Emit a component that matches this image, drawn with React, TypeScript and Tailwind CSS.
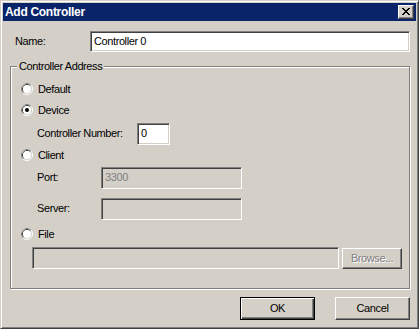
import React from "react";

const FONT = "font-['Liberation_Sans',Arial,sans-serif]";

const Radio = ({ checked }: { checked?: boolean }) => (
  <svg width="12" height="12" viewBox="0 0 12 12" className="shrink-0">
    <circle cx="6" cy="6" r="5.5" fill="none" stroke="#ffffff" />
    <path d="M2.11 9.89A5.5 5.5 0 0 1 9.89 2.11" fill="none" stroke="#808080" />
    <circle cx="6" cy="6" r="4.5" fill="#ffffff" stroke="#d4d0c8" />
    <path d="M2.82 9.18A4.5 4.5 0 0 1 9.18 2.82" fill="none" stroke="#404040" />
    <circle cx="6" cy="6" r="4" fill="#ffffff" />
    {checked && <circle cx="6" cy="6" r="2" fill="#000000" />}
  </svg>
);

const XGlyph = () => {
  const rows = [
    "XX....XX",
    ".XX..XX.",
    "..XXXX..",
    "...XX...",
    "..XXXX..",
    ".XX..XX.",
    "XX....XX",
  ];
  return (
    <svg width="8" height="7" viewBox="0 0 8 7" shapeRendering="crispEdges">
      {rows.flatMap((r, y) =>
        r.split("").map((c, x) =>
          c === "X" ? <rect key={`${x}-${y}`} x={x} y={y} width="1" height="1" fill="#000" /> : null
        )
      )}
    </svg>
  );
};

const sunken =
  "border border-t-[#808080] border-l-[#808080] border-r-white border-b-white shadow-[inset_1px_1px_0_#404040,inset_-1px_-1px_0_#d4d0c8]";

const RadioRow = ({ label, checked }: { label: string; checked?: boolean }) => (
  <div className="h-[16px] flex items-center gap-[5px]">
    <Radio checked={checked} />
    <span>{label}</span>
  </div>
);

export default function App() {
  return (
    <div
      className={`w-[419px] h-[329px] bg-[#d4d0c8] border border-t-[#d4d0c8] border-l-[#d4d0c8] border-r-[#404040] border-b-[#404040] shadow-[inset_1px_1px_0_#ffffff,inset_-1px_-1px_0_#808080] p-[2px] flex flex-col ${FONT} text-[11px] tracking-[-0.4px] text-black leading-none`}
    >
      <div className="h-[18px] bg-[#0a246a] flex items-center pl-[2px] pr-[2px] shrink-0">
        <span className="text-white font-bold text-[12px] tracking-[-0.3px]">Add Controller</span>
        <div className="ml-auto w-[16px] h-[14px] bg-[#d4d0c8] border border-t-white border-l-white border-r-[#404040] border-b-[#404040] shadow-[inset_-1px_-1px_0_#808080] flex items-center justify-center pb-[1px]">
          <XGlyph />
        </div>
      </div>

      <div className="flex flex-col pl-[7px]">
        <div className="mt-[10px] h-[21px] flex items-center">
          <span className="w-[80px] pl-[5px]">Name:</span>
          <div className={`w-[320px] h-[21px] bg-white ${sunken} flex items-center pl-[3px]`}>
            Controller 0
          </div>
        </div>

        <div className="relative mt-[14px] w-[400px] h-[223px] border border-[#808080] shadow-[1px_1px_0_#ffffff,inset_1px_1px_0_#ffffff] pl-[10px] pt-[14px] flex flex-col">
          <span className="absolute -top-[7px] left-[6px] px-[2px] bg-[#d4d0c8] leading-[13px]">
            Controller Address
          </span>

          <RadioRow label="Default" />
          <div className="mt-[5px]">
            <RadioRow label="Device" checked />
          </div>
          <div className="mt-[5px] h-[21px] flex items-center ml-[16px]">
            <span className="w-[100px]">Controller Number:</span>
            <div className={`w-[33px] h-[22px] bg-white ${sunken} flex items-center pl-[3px]`}>0</div>
          </div>
          <div className="mt-[3px]">
            <RadioRow label="Client" />
          </div>
          <div className="mt-[4px] h-[21px] flex items-center ml-[16px]">
            <span className="w-[64px]">Port:</span>
            <div className={`w-[141px] h-[22px] bg-[#d4d0c8] ${sunken} flex items-center pl-[3px] text-[#808080]`}>
              3300
            </div>
          </div>
          <div className="mt-[10px] h-[21px] flex items-center ml-[16px]">
            <span className="w-[64px]">Server:</span>
            <div className={`w-[141px] h-[22px] bg-[#d4d0c8] ${sunken}`} />
          </div>
          <div className="mt-[7px]">
            <RadioRow label="File" />
          </div>
          <div className="mt-[5px] h-[22px] flex items-center ml-[11px]">
            <div className={`w-[307px] h-[22px] bg-[#d4d0c8] ${sunken}`} />
            <div className="ml-[3px] w-[60px] h-[21px] border border-t-white border-l-white border-r-[#404040] border-b-[#404040] shadow-[inset_-1px_-1px_0_#808080] flex items-center justify-center text-[#808080] [text-shadow:1px_1px_0_#ffffff]">
              Browse...
            </div>
          </div>
        </div>

        <div className="mt-[8px] w-[400px] flex justify-end gap-[20px]">
          <div className="w-[75px] h-[23px] border border-black shadow-[inset_1px_1px_0_#ffffff,inset_-1px_-1px_0_#404040,inset_-2px_-2px_0_#808080] flex items-center justify-center">
            OK
          </div>
          <div className="w-[75px] h-[23px] border border-t-white border-l-white border-r-[#404040] border-b-[#404040] shadow-[inset_-1px_-1px_0_#808080] flex items-center justify-center">
            Cancel
          </div>
        </div>
      </div>
    </div>
  );
}
